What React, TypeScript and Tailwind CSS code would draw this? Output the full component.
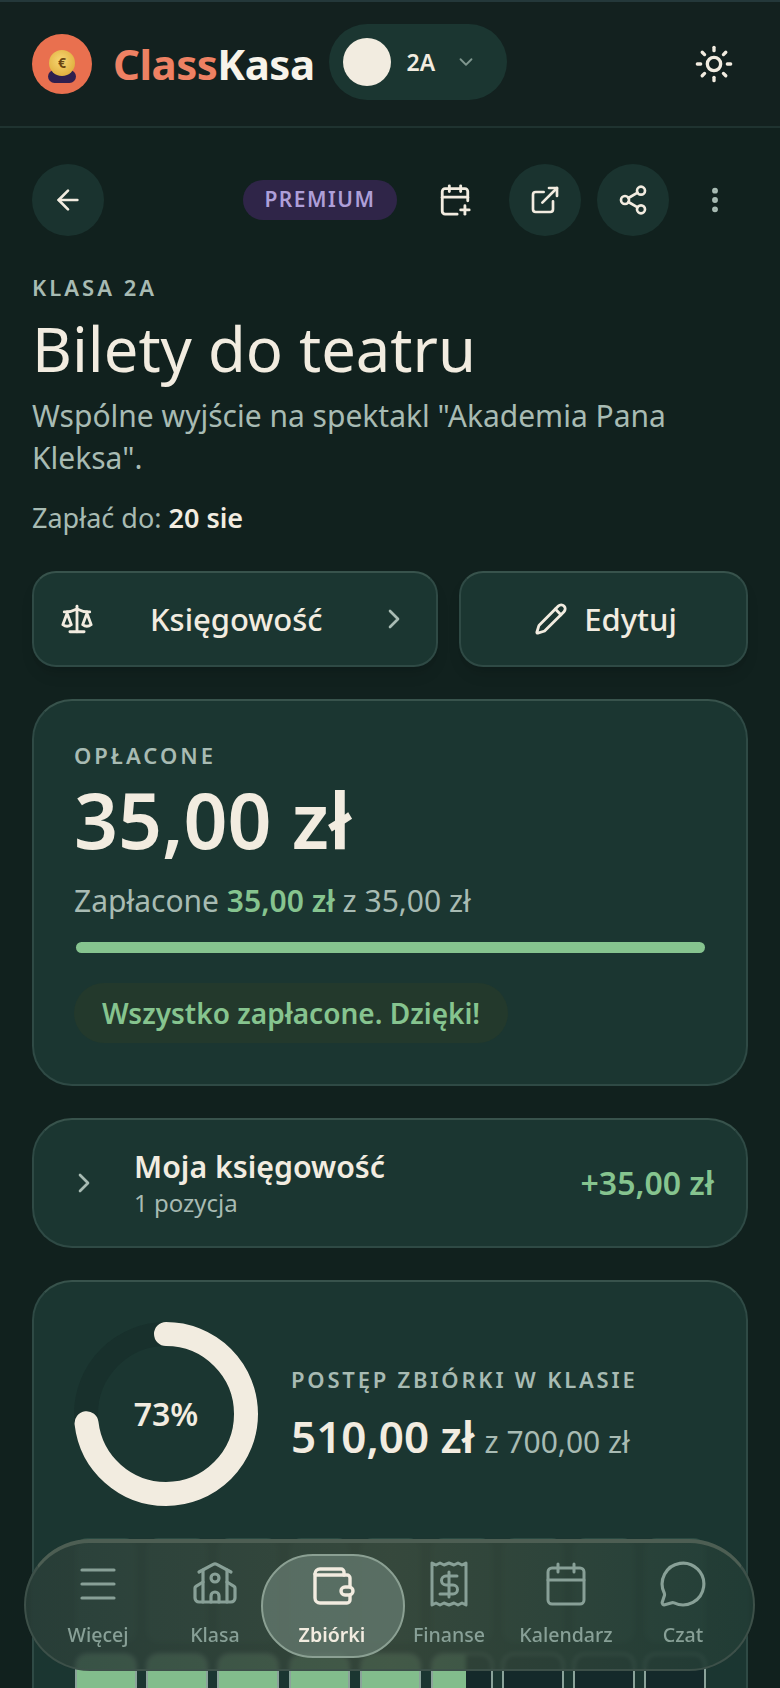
import { ArrowLeft, CalendarPlus, ChevronDown, ChevronRight, Calendar, EllipsisVertical, ExternalLink, Menu, MessageCircle, Pencil, Scale, School, Share2, Sun } from 'lucide-react';

const font = { fontFamily: '"Noto Sans", sans-serif' };

function WalletIcon() {
  return (
    <svg width="44" height="44" viewBox="0 0 44 44" fill="none" stroke="#f2ece0" strokeWidth="3.4" strokeLinecap="round" strokeLinejoin="round" className="overflow-visible">
      <path d="M5 12a5 5 0 0 1 5-5h21a3 3 0 0 1 3 3v3" />
      <path d="M5 12v24a5 5 0 0 0 5 5h27a3 3 0 0 0 3-3V16a3 3 0 0 0-3-3H6" />
      <rect x="31" y="25" width="12" height="8" rx="4" fill="#5a6e63" />
    </svg>
  );
}

function ReceiptDollar() {
  return (
    <svg width="38" height="46" viewBox="0 0 38 46" fill="none" stroke="currentColor" strokeWidth="3" strokeLinecap="round" strokeLinejoin="round">
      <path d="M2 2v42l4-2 4 2 4-2 5 2 5-2 4 2 4-2 4 2V2l-4 2-4-2-4 2-5-2-5 2-4-2-4 2Z" />
      <path d="M27 15H16a4.5 4.5 0 1 0 0 9h7a4.5 4.5 0 1 1 0 9H10" />
      <path d="M19 36V11" />
    </svg>
  );
}

function NavItem({ label, active, children }: { label: string; active?: boolean; children: React.ReactNode }) {
  return (
    <div className={`flex w-[117px] flex-col items-center ${active ? 'text-[#f2ece0]' : 'text-[#88a097]'}`}>
      <div className="flex h-[48px] items-center justify-center">{children}</div>
      <span className={`mt-[13px] text-[19.6px] leading-[28px] ${active ? 'font-semibold' : 'font-medium'}`}>{label}</span>
    </div>
  );
}

export default function App() {
  const cells = [0, 1, 2, 3, 4, 5, 6, 7, 8];

  return (
    <div style={font} className="relative h-[1688px] w-[780px] overflow-hidden bg-[#11211e] text-[#f2ece0]">
      <header className="flex h-[128px] items-center border-t-2 border-b-2 border-t-[#24383a] border-b-[#1f3330] bg-[#13211f] pl-8 pr-[46px]">
        <div className="relative flex h-[60px] w-[60px] items-center justify-center rounded-full bg-[#e9704f]">
          <div className="absolute bottom-[11px] h-[13px] w-[28px] rounded-full bg-[#2f1f4e]" />
          <div className="relative flex h-[26px] w-[26px] -translate-y-[1px] items-center justify-center rounded-full bg-[radial-gradient(circle_at_45%_40%,#f7d774,#d9a22c)] text-[14px] font-bold leading-none text-[#6b4610]">€</div>
        </div>
        <div className="ml-[21px] text-[42px] font-bold leading-none tracking-[-0.5px]">
          <span className="text-[#ee8163]">Class</span>
          <span className="text-[#f7f3ea]">Kasa</span>
        </div>
        <div className="-mt-[4px] ml-[14px] flex h-[76px] w-[178px] items-center rounded-full bg-[#1b3631] pl-[14px]">
          <div className="h-[48px] w-[48px] rounded-full bg-[#f2ece0]" />
          <span className="ml-4 text-[23px] font-semibold">2A</span>
          <ChevronDown className="ml-[20px] text-[#7f968e]" size={22} strokeWidth={2} />
        </div>
        <Sun className="ml-auto text-[#f2ece0]" size={40} strokeWidth={2} />
      </header>

      <main className="px-8 pt-[36px]">
        <div className="flex h-[72px] items-center">
          <div className="flex h-[72px] w-[72px] items-center justify-center rounded-full bg-[#1a332f]">
            <ArrowLeft size={32} strokeWidth={2} />
          </div>
          <div className="ml-[139px] flex h-[40px] w-[154px] items-center justify-center rounded-full bg-[#2f2548] text-[21px] font-semibold tracking-[1.5px] text-[#ae9fd8]">PREMIUM</div>
          <CalendarPlus className="ml-[41px]" size={34} strokeWidth={2} />
          <div className="ml-[37px] flex h-[72px] w-[72px] items-center justify-center rounded-full bg-[#1a332f]">
            <ExternalLink size={32} strokeWidth={2} />
          </div>
          <div className="ml-4 flex h-[72px] w-[72px] items-center justify-center rounded-full bg-[#1a332f]">
            <Share2 size={32} strokeWidth={2} />
          </div>
          <EllipsisVertical className="ml-[30px] text-[#a8bbb3]" size={32} strokeWidth={2.4} />
        </div>

        <div className="mt-[37px] text-[22px] font-semibold leading-[28px] tracking-[3px] text-[#a8bbb3]">KLASA 2A</div>
        <h1 className="mt-[12px] text-[61.5px] font-normal leading-[70px]">Bilety do teatru</h1>
        <p className="mt-[12px] text-[30px] leading-[42px] text-[#a8bbb3]">Wspólne wyjście na spektakl "Akademia Pana Kleksa".</p>
        <p className="mt-[20px] text-[27px] leading-[38px] text-[#a8bbb3]">
          Zapłać do: <span className="font-semibold text-[#f2ece0]">20 sie</span>
        </p>

        <div className="mt-[34px] flex gap-[21px]">
          <div className="flex h-[96px] w-[406px] items-center rounded-[24px] border-2 border-[#2f4a45] border-t-[#38534c] bg-[#1b3631] pl-[26px] pr-[26px] shadow-lg">
            <Scale size={34} strokeWidth={2} />
            <span className="ml-[56px] text-[31px] font-medium">Księgowość</span>
            <ChevronRight className="ml-auto text-[#a8bbb3]" size={32} strokeWidth={2} />
          </div>
          <div className="flex h-[96px] w-[289px] items-center justify-center gap-[16px] rounded-[24px] border-2 border-[#2f4a45] border-t-[#38534c] bg-[#1b3631] pl-[4px] shadow-lg">
            <Pencil size={34} strokeWidth={2} />
            <span className="text-[31px] font-medium">Edytuj</span>
          </div>
        </div>

        <section className="mt-[32px] h-[387px] rounded-[40px] border-2 border-[#2f4a45] border-t-[#38534c] bg-[#1b3631] px-[40px] pt-[40px]">
          <div className="text-[22px] font-semibold leading-[28px] tracking-[3px] text-[#a8bbb3]">OPŁACONE</div>
          <div className="mt-[4px] text-[77px] font-semibold leading-[94px]">35,00 zł</div>
          <div className="mt-[14px] text-[30px] leading-[40px] text-[#a8bbb3]">
            Zapłacone <span className="font-semibold text-[#86c48f]">35,00 zł</span> z 35,00 zł
          </div>
          <div className="ml-[2px] mt-[21px] h-[11px] w-[629px] rounded-full bg-[#86c48f]" />
          <div className="mt-[30px] flex h-[60px] w-[434px] items-center justify-center rounded-full bg-[#23392c] text-[28px] font-semibold text-[#86c48f]">Wszystko zapłacone. Dzięki!</div>
        </section>

        <section className="mt-[32px] flex h-[130px] items-center rounded-[40px] border-2 border-[#2f4a45] border-t-[#38534c] bg-[#1b3631] pl-[34px] pr-[32px]">
          <ChevronRight className="text-[#a8bbb3]" size={32} strokeWidth={2} />
          <div className="ml-[34px]">
            <div className="text-[30.3px] font-semibold leading-[40px]">Moja księgowość</div>
            <div className="text-[24px] leading-[32px] text-[#a8bbb3]">1 pozycja</div>
          </div>
          <div className="ml-auto text-[32px] font-semibold text-[#86c48f]">+35,00 zł</div>
        </section>

        <section className="mt-[32px] h-[500px] rounded-[40px] border-2 border-[#2f4a45] border-t-[#38534c] bg-[#1b3631] px-[40px] pt-[40px]">
          <div className="flex items-center">
            <div className="relative h-[184px] w-[184px] shrink-0">
              <svg width="184" height="184" viewBox="0 0 184 184" className="-rotate-90">
                <circle cx="92" cy="92" r="80" fill="none" stroke="#18302c" strokeWidth="24" />
                <circle cx="92" cy="92" r="80" fill="none" stroke="#f2ece0" strokeWidth="24" strokeLinecap="round" strokeDasharray="367 503" />
              </svg>
              <div className="absolute inset-0 flex items-center justify-center text-[32px] font-semibold">73%</div>
            </div>
            <div className="ml-[33px] mt-[13px]">
              <div className="text-[22px] font-semibold leading-[28px] tracking-[2.8px] text-[#a8bbb3]">POSTĘP ZBIÓRKI W KLASIE</div>
              <div className="mt-[13px] leading-[60px]">
                <span className="text-[44px] font-semibold">510,00 zł</span>
                <span className="ml-[10px] text-[30px] text-[#a8bbb3]">z 700,00 zł</span>
              </div>
            </div>
          </div>

          <div className="ml-[1px] mt-[32px] grid grid-cols-9 gap-[9.5px]">
            {cells.map((c) => (
              <div key={c} className="h-[105px] rounded-[12px] bg-[#2a4a42]" />
            ))}
            {cells.map((c) => (
              <div key={c} className="relative h-[105px] overflow-hidden rounded-[12px] border-2 border-[#8aa39a] bg-[#14292a]">
                {c < 5 && <div className="absolute inset-0 bg-[#82bd8c]" />}
                {c === 5 && <div className="absolute inset-y-0 left-0 w-[58%] bg-[#82bd8c]" />}
              </div>
            ))}
          </div>
        </section>
      </main>

      <nav className="absolute bottom-[17px] left-[24px] flex h-[132px] w-[731px] items-start justify-center rounded-[66px] border-2 border-t-[4px] border-[#3d5049] border-t-[#4d5e53] bg-gradient-to-r from-[#2a3f39]/85 via-[#38483b]/85 to-[#223d36]/85 pl-[2px] pt-[17px] backdrop-blur-[2px]">
        <div className="absolute left-[235px] top-[11px] h-[104px] w-[144px] rounded-[52px] border-2 border-[#8ba093] bg-[#6a7f73]/70" />
        <div className="relative flex">
          <NavItem label="Więcej"><Menu size={48} strokeWidth={1.6} /></NavItem>
          <NavItem label="Klasa"><School size={48} strokeWidth={1.6} /></NavItem>
          <NavItem label="Zbiórki" active><WalletIcon /></NavItem>
          <NavItem label="Finanse"><ReceiptDollar /></NavItem>
          <NavItem label="Kalendarz"><Calendar size={48} strokeWidth={1.5} /></NavItem>
          <NavItem label="Czat"><MessageCircle size={50} strokeWidth={1.5} /></NavItem>
        </div>
      </nav>
    </div>
  );
}
